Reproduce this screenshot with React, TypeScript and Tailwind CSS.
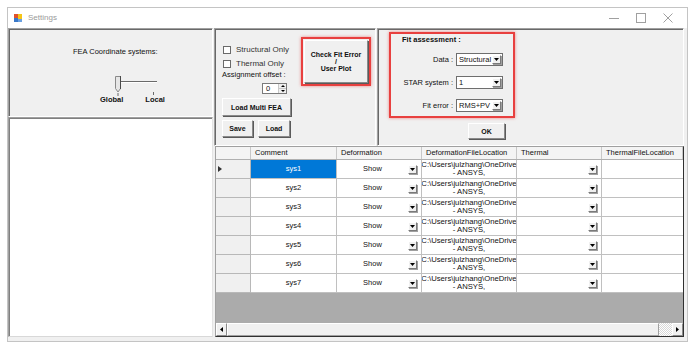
import React from "react";

const FONT = "font-['Liberation_Sans',Arial,sans-serif]";

function Tri({ dir = "down" }: { dir?: "down" | "up" | "left" | "right" }) {
  if (dir === "down")
    return (
      <svg width="5" height="3" viewBox="0 0 5 3">
        <path d="M0 0H5L2.5 3Z" fill="#000" />
      </svg>
    );
  if (dir === "up")
    return (
      <svg width="5" height="3" viewBox="0 0 5 3">
        <path d="M0 3H5L2.5 0Z" fill="#000" />
      </svg>
    );
  if (dir === "left")
    return (
      <svg width="3" height="5" viewBox="0 0 3 5">
        <path d="M3 0V5L0 2.5Z" fill="#000" />
      </svg>
    );
  return (
    <svg width="3" height="5" viewBox="0 0 3 5">
      <path d="M0 0V5L3 2.5Z" fill="#000" />
    </svg>
  );
}

function DropBtn() {
  return (
    <div className="w-[9px] h-[9px] shrink-0 bg-[#f0f0f0] border border-t-white border-l-white border-r-[#7a7a7a] border-b-[#7a7a7a] shadow-[1px_1px_0_#a0a0a0] flex items-center justify-center">
      <Tri />
    </div>
  );
}

function Combo({ value }: { value: string }) {
  return (
    <div className="w-[47px] h-[13px] bg-white border border-[#6e6e6e] flex items-center">
      <span className="flex-1 pl-[2px] text-[7.5px] leading-none whitespace-nowrap overflow-hidden">{value}</span>
      <div className="mr-[1px]">
        <DropBtn />
      </div>
    </div>
  );
}

function Btn({ w, h, children }: { w: string; h: string; children: React.ReactNode }) {
  return (
    <div
      className={`${w} ${h} bg-[#f0f0f0] border border-t-white border-l-white border-r-[#8a8a8a] border-b-[#8a8a8a] shadow-[1px_1px_0_#5a5a5a] flex items-center justify-center font-bold text-[7px] leading-[7px] text-center`}
    >
      {children}
    </div>
  );
}

function CheckRow({ label }: { label: string }) {
  return (
    <div className="h-[9px] flex items-center">
      <div className="ml-[1px] w-[8px] h-[8px] bg-white border border-[#6a6a6a]" />
      <span className="ml-[5px] text-[8px] leading-none text-[#333] whitespace-nowrap">{label}</span>
    </div>
  );
}

const rows = ["sys1", "sys2", "sys3", "sys4", "sys5", "sys6", "sys7"];

export default function App() {
  return (
    <div className={`w-[693px] h-[349px] bg-white overflow-hidden ${FONT} text-[#111]`}>
      <div className="ml-[7px] mt-[7px] w-[681px] h-[335px] border border-[#c4c4c4] flex flex-col">
        {/* Title bar */}
        <div className="h-[20px] shrink-0 bg-white flex items-center">
          <svg className="ml-[6px]" width="8" height="8" viewBox="0 0 8 8">
            <rect x="0" y="0" width="4" height="4" fill="#e0522c" />
            <rect x="4" y="0" width="4" height="5" fill="#f5c518" />
            <rect x="0" y="4" width="4" height="4" fill="#3a78c8" />
            <rect x="4" y="5" width="4" height="3" fill="#6aa0e0" />
          </svg>
          <span className="ml-[6px] text-[8px] leading-none text-[#9a9a9a]">Settings</span>
          <div className="ml-auto mr-[6px] flex items-center">
            <div className="w-[27px] flex justify-center">
              <svg width="10" height="10" viewBox="0 0 10 10">
                <path d="M0 5.5H10" stroke="#a0a0a0" strokeWidth="1" />
              </svg>
            </div>
            <div className="w-[27px] flex justify-center">
              <svg width="10" height="10" viewBox="0 0 10 10">
                <rect x="0.5" y="0.5" width="9" height="9" fill="none" stroke="#a0a0a0" strokeWidth="1" />
              </svg>
            </div>
            <div className="w-[27px] flex justify-center">
              <svg width="10" height="10" viewBox="0 0 10 10">
                <path d="M0.5 0.5L9.5 9.5M9.5 0.5L0.5 9.5" stroke="#a0a0a0" strokeWidth="1" />
              </svg>
            </div>
          </div>
        </div>

        {/* Client */}
        <div className="flex-1 bg-[#f0f0f0] flex">
          {/* Left column */}
          <div className="w-[205px] flex flex-col">
            <div className="h-[89px] border border-t-[#a0a0a0] border-l-[#a0a0a0] border-r-white border-b-white shadow-[inset_1px_1px_0_#696969] flex flex-col">
              <div className="mt-[19px] ml-[64px] h-[8px] text-[7.5px] leading-[8px] whitespace-nowrap">FEA Coordinate systems:</div>
              <svg className="mt-[18px] ml-[101px]" width="52" height="22" viewBox="0 0 52 22">
                <line x1="10" y1="7.5" x2="47" y2="7.5" stroke="#6a6a6a" strokeWidth="1" />
                <line x1="10" y1="8.5" x2="47" y2="8.5" stroke="#ffffff" strokeWidth="1" />
                <path d="M5.5 2.5H10.5V14.5L8 18L5.5 14.5Z" fill="#e6e6e6" stroke="#8a8a8a" strokeWidth="1" />
                <line x1="10.5" y1="2" x2="10.5" y2="15" stroke="#4a4a4a" strokeWidth="1" />
                <line x1="8" y1="19" x2="8" y2="22" stroke="#6a6a6a" strokeWidth="1" />
                <line x1="43.5" y1="18" x2="43.5" y2="21" stroke="#6a6a6a" strokeWidth="1" />
              </svg>
              <div className="flex h-[8px] ml-[91px] font-bold text-[7.5px] leading-[8px]">
                <span>Global</span>
                <span className="ml-[22px]">Local</span>
              </div>
            </div>
            <div className="h-[220px] bg-white border border-t-[#a0a0a0] border-l-[#a0a0a0] border-r-[#e4e4e4] border-b-[#d8d8d8] shadow-[inset_1px_1px_0_#808080]" />
          </div>

          {/* Right area */}
          <div className="ml-[1px] w-[470px] flex flex-col">
            <div className="h-[118px] flex">
              {/* Middle panel */}
              <div className="w-[162px] h-full border border-t-[#a0a0a0] border-l-[#a0a0a0] border-r-white border-b-white shadow-[inset_1px_1px_0_#696969] flex pl-[7px]">
                <div className="w-[69px] flex flex-col pt-[16px]">
                  <CheckRow label="Structural Only" />
                  <div className="mt-[5px]">
                    <CheckRow label="Thermal Only" />
                  </div>
                  <div className="mt-[3px] h-[8px] text-[7.5px] leading-[8px] whitespace-nowrap">Assignment offset :</div>
                  <div className="mt-[4px] ml-[40px] w-[25px] h-[11px] bg-white border border-[#7a7a7a] flex">
                    <span className="flex-1 pl-[3px] text-[7.5px] leading-[9px]">0</span>
                    <div className="w-[8px] flex flex-col border-l border-[#c8c8c8]">
                      <div className="flex-1 bg-[#f0f0f0] flex items-center justify-center border-b border-[#c8c8c8]">
                        <svg width="4" height="2" viewBox="0 0 4 2"><path d="M0 2H4L2 0Z" fill="#000" /></svg>
                      </div>
                      <div className="flex-1 bg-[#f0f0f0] flex items-center justify-center">
                        <svg width="4" height="2" viewBox="0 0 4 2"><path d="M0 0H4L2 2Z" fill="#000" /></svg>
                      </div>
                    </div>
                  </div>
                  <div className="mt-[4px]">
                    <Btn w="w-[69px]" h="h-[18px]">Load Multi FEA</Btn>
                  </div>
                  <div className="mt-[4px] flex">
                    <Btn w="w-[31px]" h="h-[17px]">Save</Btn>
                    <div className="ml-[5px]">
                      <Btn w="w-[32px]" h="h-[17px]">Load</Btn>
                    </div>
                  </div>
                </div>
                <div className="ml-[10px] mt-[8px] w-[70px] h-[49px] border-2 border-[#e8403f] shadow-[0_0_3px_rgba(232,64,63,0.6)] p-[1px]">
                  <Btn w="w-full" h="h-full">
                    <div className="flex flex-col items-center">
                      <span>Check Fit Error</span>
                      <span>/</span>
                      <span>User Plot</span>
                    </div>
                  </Btn>
                </div>
              </div>

              {/* Right panel */}
              <div className="ml-[1px] w-[307px] h-full border border-t-[#a0a0a0] border-l-[#a0a0a0] border-r-white border-b-white shadow-[inset_1px_1px_0_#696969] flex flex-col pl-[11px] pt-[3px]">
                <div className="w-[126px] h-[86px] border-2 border-[#e8403f] shadow-[0_0_3px_rgba(232,64,63,0.6)] flex flex-col">
                  <div className="mt-[2px] ml-[11px] h-[8px] font-bold text-[7.5px] leading-[8px] whitespace-nowrap">Fit assessment :</div>
                  {[
                    ["Data :", "Structural", "mt-[9px]"],
                    ["STAR system :", "1", "mt-[10px]"],
                    ["Fit error :", "RMS+PV", "mt-[10px]"],
                  ].map(([label, val, mt]) => (
                    <div key={label} className={`${mt} flex items-center h-[13px]`}>
                      <span className="w-[62px] text-right text-[7.5px] leading-none whitespace-nowrap">{label}</span>
                      <div className="ml-[3px]">
                        <Combo value={val} />
                      </div>
                    </div>
                  ))}
                </div>
                <div className="mt-[5px] ml-[79px]">
                  <Btn w="w-[37px]" h="h-[16px]">OK</Btn>
                </div>
              </div>
            </div>

            {/* Grid */}
            <div className="ml-[1px] w-[469px] h-[191px] border border-t-[#a0a0a0] border-l-[#a0a0a0] border-r-[#303030] border-b-[#303030] bg-[#ababab] flex flex-col text-[7.5px]">
              <div className="h-[13px] flex bg-[#f4f4f4] border-b border-[#b0b0b0] shrink-0">
                <div className="w-[35px] border-r border-[#c8c8c8]" />
                {[
                  ["Comment", "w-[86px]"],
                  ["Deformation", "w-[85px]"],
                  ["DeformationFileLocation", "w-[95px]"],
                  ["Thermal", "w-[85px]"],
                  ["ThermalFileLocation", "flex-1"],
                ].map(([t, w]) => (
                  <div key={t} className={`${w} border-r border-[#c8c8c8] pl-[4px] flex items-center whitespace-nowrap overflow-hidden leading-none`}>
                    {t}
                  </div>
                ))}
              </div>
              {rows.map((r, i) => (
                <div key={r} className="h-[19px] flex shrink-0">
                  <div className="w-[35px] bg-[#f0f0f0] border-r border-b border-[#b8b8b8] flex items-center pl-[2px]">
                    {i === 0 && (
                      <svg width="4" height="6" viewBox="0 0 4 6">
                        <path d="M0 0V6L4 3Z" fill="#333" />
                      </svg>
                    )}
                  </div>
                  <div
                    className={`w-[86px] border-r border-b border-[#c0c0c0] flex items-center justify-center leading-none ${
                      i === 0 ? "bg-[#0078d7] text-white" : "bg-white"
                    }`}
                  >
                    {r}
                  </div>
                  <div className="w-[85px] bg-white border-r border-b border-[#c0c0c0] flex items-center">
                    <span className="flex-1 text-center leading-none">Show</span>
                    <div className="mr-[4px]">
                      <DropBtn />
                    </div>
                  </div>
                  <div className="w-[95px] bg-white border-r border-b border-[#c0c0c0] flex flex-col items-center overflow-hidden pt-[1px] text-[7.7px] leading-[8px] whitespace-nowrap">
                    <span className="shrink-0">C:\Users\julzhang\OneDrive</span>
                    <span className="shrink-0">- ANSYS,</span>
                  </div>
                  <div className="w-[85px] bg-white border-r border-b border-[#c0c0c0] flex items-center justify-end">
                    <div className="mr-[4px]">
                      <DropBtn />
                    </div>
                  </div>
                  <div className="flex-1 bg-white border-b border-[#c0c0c0]" />
                </div>
              ))}
              <div className="flex-1" />
              <div className="h-[13px] shrink-0 flex bg-[#f0f0f0]">
                <div className="w-[11px] bg-[#f0f0f0] border border-t-white border-l-white border-r-[#8a8a8a] border-b-[#8a8a8a] flex items-center justify-center">
                  <Tri dir="left" />
                </div>
                <div className="w-[432px] bg-[#f0f0f0] border border-t-white border-l-white border-r-[#a0a0a0] border-b-[#a0a0a0]" />
                <div className="flex-1 bg-[repeating-conic-gradient(#ffffff_0_25%,#d8d8d8_0_50%)] bg-[length:2px_2px]" />
                <div className="w-[11px] bg-[#f0f0f0] border border-t-white border-l-white border-r-[#8a8a8a] border-b-[#8a8a8a] flex items-center justify-center">
                  <Tri dir="right" />
                </div>
              </div>
            </div>
          </div>
        </div>
      </div>
    </div>
  );
}
